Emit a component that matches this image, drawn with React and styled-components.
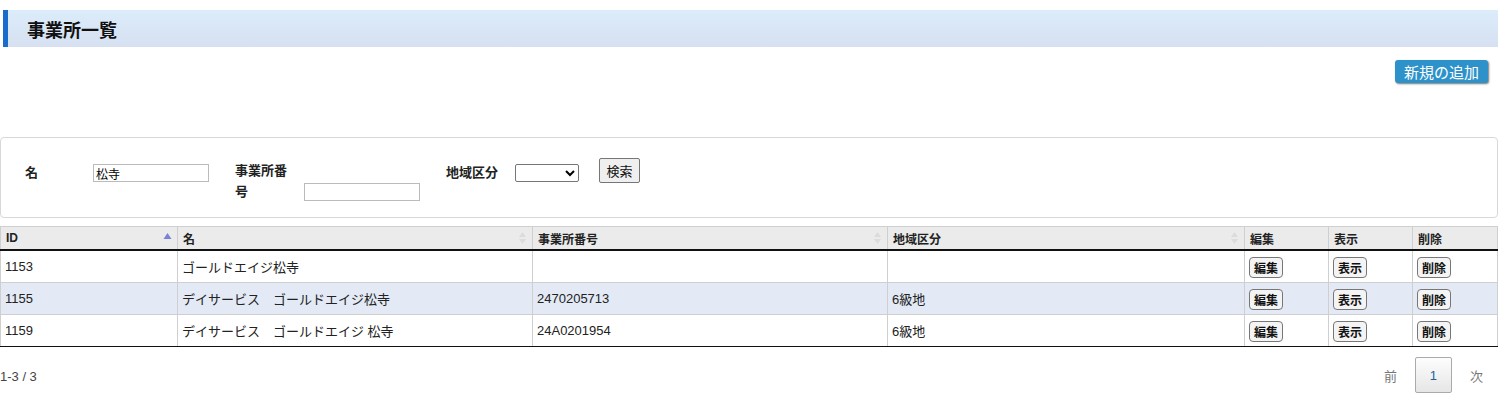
import React from 'react';
import styled, { createGlobalStyle } from 'styled-components';

const GlobalStyle = createGlobalStyle`
    body {
        margin: 0;
        background: #fff;
        color: #222;
        font-family: "Liberation Sans", Arial, "Noto Sans CJK JP", sans-serif;
        font-size: 13px;
    }
`

const Page = styled.div`
    width: 1498px;
    padding-top: 10px;
`

const TitleBar = styled.h1`
    margin: 0 0 0 3px;
    height: 37px;
    display: flex;
    align-items: center;
    padding-left: 19px;
    border-left: 5px solid #1a6ccc;
    background: linear-gradient(to bottom, #dcecfa, #d6e0f1);
    font-size: 18px;
    font-weight: bold;
    color: #111;
`

const ActionRow = styled.div`
    display: flex;
    justify-content: flex-end;
    padding: 13px 10px 0 0;
    height: 54px;
    box-sizing: border-box;
`

const AddButton = styled.button`
    height: 23px;
    padding: 0 9px;
    border: none;
    border-radius: 3px;
    background: #2e92ca;
    color: #fff;
    font-family: inherit;
    font-size: 15px;
    box-shadow: 1px 1px 2px rgba(0, 0, 0, 0.55);
`

const SearchPanel = styled.form`
    margin-top: 36px;
    border: 1px solid #d8d8d8;
    border-radius: 4px;
    padding: 20px 24px 15px;
    display: flex;
    align-items: flex-start;
`

const Field = styled.div`
    display: flex;
    align-items: flex-start;
    margin-right: ${p => p.$gap || 0}px;
    margin-top: ${p => p.$top || 0}px;
`

const Label = styled.label`
    width: ${p => p.$width}px;
    font-weight: bold;
    font-size: 13px;
    line-height: ${p => p.$lh || 18}px;
    margin-top: ${p => p.$top || 0}px;
`

const TextInput = styled.input`
    box-sizing: border-box;
    width: 116px;
    height: 18px;
    border: 1px solid #bbb;
    padding: 0 2px;
    font-family: inherit;
    font-size: 12px;
    margin-top: ${p => p.$top || 0}px;
    outline: none;
`

const Select = styled.select`
    box-sizing: border-box;
    width: 64px;
    height: 18px;
    border: 1px solid #767676;
    border-radius: 2px;
    background: #fff;
    font-size: 12px;
`

const SearchButton = styled.button`
    box-sizing: border-box;
    width: 41px;
    height: 25px;
    border: 1px solid #767676;
    border-radius: 2px;
    background: #efefef;
    font-family: inherit;
    font-size: 13px;
    color: #111;
    padding: 0;
`

const Table = styled.table`
    margin-top: 8px;
    width: 1497px;
    border-collapse: collapse;
    table-layout: fixed;
    font-size: 13px;
`

const Th = styled.th`
    position: relative;
    height: 22px;
    padding: 0 5px;
    text-align: left;
    font-size: 12px;
    font-weight: bold;
    background: #ebebeb;
    border: 1px solid #cfcfcf;
    border-bottom: 2px solid #111;
`

const SortIcon = styled.svg`
    position: absolute;
    right: 5px;
    top: 4px;
`

const Row = styled.tr`
    background: ${p => (p.$alt ? '#e3eaf6' : '#fff')};
    &:last-child td {
        border-bottom: 1px solid #111;
    }
`

const Td = styled.td`
    height: 31px;
    padding: 0 4px;
    border: 1px solid #cfcfcf;
    border-top: none;
    white-space: nowrap;
`

const SmallButton = styled.button`
    box-sizing: border-box;
    height: 21px;
    padding: 0 4px;
    border: 1px solid #777;
    border-radius: 4px;
    background: #f4f4f4;
    font-family: inherit;
    font-size: 12px;
    font-weight: bold;
    color: #111;
    margin-top: 2px;
`

const Footer = styled.div`
    display: flex;
    justify-content: space-between;
    align-items: center;
    margin-top: 10px;
    padding-right: 15px;
`

const Count = styled.span`
    font-size: 13px;
    color: #444;
    padding-top: 3px;
`

const Pager = styled.div`
    display: flex;
    align-items: center;
    gap: 18px;
`

const PageLink = styled.span`
    font-size: 13px;
    color: #777;
`

const PageBox = styled.span`
    box-sizing: border-box;
    width: 37px;
    height: 36px;
    display: flex;
    align-items: center;
    justify-content: center;
    border: 1px solid #aaa;
    border-radius: 2px;
    background: linear-gradient(to bottom, #fdfdfd, #e6e6e6);
    color: #1f5f9c;
    font-size: 13px;
`

const SortArrows = ({ active }) => (
    <SortIcon width="9" height="14" viewBox="0 0 9 14">
        {active ? (
            <polygon points="4.5,2 8.5,8 0.5,8" fill="#7a82d8" />
        ) : (
            <g fill="#dcdcdc">
                <polygon points="4.5,1 8,6 1,6" />
                <polygon points="4.5,13 8,8 1,8" />
            </g>
        )}
    </SortIcon>
)

const columns = [
    { label: 'ID', width: 177, sort: 'active' },
    { label: '名', width: 355, sort: 'both' },
    { label: '事業所番号', width: 355, sort: 'both' },
    { label: '地域区分', width: 357, sort: 'both' },
    { label: '編集', width: 84 },
    { label: '表示', width: 84 },
    { label: '削除', width: 85 },
]

const rows = [
    { id: '1153', name: 'ゴールドエイジ松寺', no: '', area: '' },
    { id: '1155', name: 'デイサービス　ゴールドエイジ松寺', no: '2470205713', area: '6級地' },
    { id: '1159', name: 'デイサービス　ゴールドエイジ 松寺', no: '24A0201954', area: '6級地' },
]

class App extends React.Component {
    render() {
        return (
            <Page>
                <GlobalStyle />
                <TitleBar>事業所一覧</TitleBar>
                <ActionRow>
                    <AddButton>新規の追加</AddButton>
                </ActionRow>

                <SearchPanel onSubmit={e => e.preventDefault()}>
                    <Field $gap={26} $top={6}>
                        <Label $width={68}>名</Label>
                        <TextInput defaultValue="松寺" />
                    </Field>
                    <Field $gap={26}>
                        <Label $width={69} $lh={21} $top={2}>事業所番<br />号</Label>
                        <TextInput $top={25} />
                    </Field>
                    <Field $gap={20} $top={6}>
                        <Label $width={69}>地域区分</Label>
                        <Select><option></option></Select>
                    </Field>
                    <SearchButton>検索</SearchButton>
                </SearchPanel>

                <Table>
                    <colgroup>
                        {columns.map(c => <col key={c.label} style={{ width: c.width }} />)}
                    </colgroup>
                    <thead>
                        <tr>
                            {columns.map(c => (
                                <Th key={c.label}>
                                    {c.label}
                                    {c.sort && <SortArrows active={c.sort === 'active'} />}
                                </Th>
                            ))}
                        </tr>
                    </thead>
                    <tbody>
                        {rows.map((r, i) => (
                            <Row key={r.id} $alt={i === 1}>
                                <Td>{r.id}</Td>
                                <Td>{r.name}</Td>
                                <Td>{r.no}</Td>
                                <Td>{r.area}</Td>
                                <Td><SmallButton>編集</SmallButton></Td>
                                <Td><SmallButton>表示</SmallButton></Td>
                                <Td><SmallButton>削除</SmallButton></Td>
                            </Row>
                        ))}
                    </tbody>
                </Table>

                <Footer>
                    <Count>1-3 / 3</Count>
                    <Pager>
                        <PageLink>前</PageLink>
                        <PageBox>1</PageBox>
                        <PageLink>次</PageLink>
                    </Pager>
                </Footer>
            </Page>
        )
    }
}

export default App;
